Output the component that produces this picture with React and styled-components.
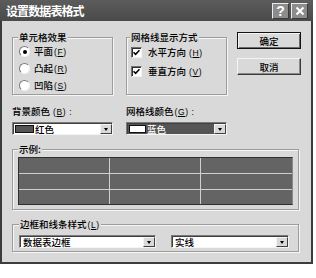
import React from 'react';
import styled, { createGlobalStyle } from 'styled-components';

const FACE = '#d9d9d9';
const FONT = '"Noto Sans CJK SC", "Noto Sans", sans-serif';

const Global = createGlobalStyle`
  html, body { margin: 0; padding: 0; background: #fff; }
  body { font-family: ${FONT}; color: #000; font-weight: 500; }
`;

const Dialog = styled.div`
  width: 313px;
  height: 264px;
  box-sizing: border-box;
  background: ${FACE};
  border: 2px solid #3c3c3c;
  border-top: none;
  display: flex;
  flex-direction: column;
`;

const TitleBar = styled.div`
  height: 21px;
  margin: 0 -2px;
  padding: 0 5px 0 6px;
  background: linear-gradient(#5c5c5c, #4a4a4a);
  display: flex;
  align-items: center;
  justify-content: space-between;
`;

const Title = styled.span`
  color: #fff;
  font-size: 12px;
  font-weight: 700;
  letter-spacing: -0.9px;
  line-height: 14px;
`;

const TitleButtons = styled.div`
  display: flex;
  gap: 2px;
`;

const TitleButton = styled.div`
  width: 17px;
  height: 16px;
  box-sizing: border-box;
  background: #8c8c8c;
  border: 1px solid;
  border-color: #ececec #3a3a3a #3a3a3a #ececec;
  display: flex;
  align-items: center;
  justify-content: center;
  color: #fff;
  font-family: "Liberation Sans", sans-serif;
  font-weight: 700;
  font-size: 14px;
  line-height: 14px;
`;

const Body = styled.div`
  flex: 1;
  padding: 10px 0 0 10px;
  display: flex;
  flex-direction: column;
`;

const TopRow = styled.div`
  display: flex;
  align-items: flex-start;
`;

const Group = styled.fieldset`
  margin: ${p => p.$mt || 0}px 0 0 ${p => p.$ml || 0}px;
  padding: 0;
  min-width: 0;
  box-sizing: border-box;
  width: ${p => p.$w}px;
  height: ${p => p.$h}px;
  border: 1px solid #9c9c9c;
  box-shadow: inset 1px 1px 0 #f6f6f6, 1px 1px 0 #f6f6f6;
`;

const Legend = styled.legend`
  margin-left: ${p => p.$ml}px;
  padding: 0 1px;
  font-size: 9.5px;
  line-height: 12px;
  background: ${FACE};
  white-space: nowrap;
`;

const Key = styled.span`
  margin-left: ${p => p.$gap || 0}px;
  letter-spacing: 0.6px;
  font-family: "Liberation Sans", sans-serif;
  font-size: 8.5px;
  font-weight: 400;
`;

const U = styled.span`
  text-decoration: underline;
  text-underline-offset: 1px;
`;

const OptionList = styled.div`
  display: flex;
  flex-direction: column;
  padding-left: ${p => p.$pl}px;
`;

const OptionRow = styled.div`
  height: ${p => p.$h}px;
  display: flex;
  align-items: center;
  gap: ${p => p.$gap}px;
  font-size: 9.5px;
  line-height: 12px;
  white-space: nowrap;
`;

const Radio = styled.span`
  width: 11px;
  height: 11px;
  box-sizing: border-box;
  border-radius: 50%;
  background: #fff;
  border: 1px solid;
  border-color: #7a7a7a #f2f2f2 #f2f2f2 #7a7a7a;
  display: flex;
  align-items: center;
  justify-content: center;
  &::after {
    content: '';
    width: 4px;
    height: 4px;
    border-radius: 50%;
    background: ${p => (p.$on ? '#000' : 'transparent')};
  }
`;

const Check = styled.span`
  width: 11px;
  height: 11px;
  box-sizing: border-box;
  background: #fff;
  border: 1px solid;
  border-color: #707070 #f2f2f2 #f2f2f2 #707070;
  box-shadow: inset 1px 1px 0 #303030;
  display: flex;
  align-items: center;
  justify-content: center;
`;

const ButtonCol = styled.div`
  margin: 1px 0 0 10px;
  display: flex;
  flex-direction: column;
  gap: 9px;
`;

const Button = styled.div`
  width: 64px;
  height: 17px;
  box-sizing: border-box;
  background: ${FACE};
  border: 1px solid;
  border-color: ${p => (p.$default ? '#111' : '#f4f4f4 #3a3a3a #3a3a3a #f4f4f4')};
  box-shadow: ${p =>
    p.$default
      ? 'inset 1px 1px 0 #f4f4f4, inset -1px -1px 0 #6a6a6a'
      : 'inset -1px -1px 0 #8a8a8a'};
  display: flex;
  align-items: center;
  justify-content: center;
  font-size: 9.5px;
  line-height: 12px;
`;

const ColorRow = styled.div`
  margin-top: 10px;
  display: grid;
  grid-template-columns: 101px 101px;
  column-gap: 13px;
`;

const Field = styled.div`
  display: flex;
  flex-direction: column;
  gap: 4px;
`;

const Label = styled.div`
  font-size: 9.5px;
  line-height: 12px;
  white-space: nowrap;
`;

const Combo = styled.div`
  width: ${p => p.$w}px;
  height: 13px;
  box-sizing: border-box;
  background: #fff;
  border: 1px solid;
  border-color: #7a7a7a #f4f4f4 #f4f4f4 #7a7a7a;
  box-shadow: inset 1px 1px 0 #404040;
  display: flex;
  align-items: stretch;
`;

const ComboValue = styled.div`
  flex: 1;
  min-width: 0;
  margin: 1px 0 0 1px;
  display: flex;
  align-items: center;
  gap: 1px;
  padding-left: ${p => p.$pl || 0}px;
  font-size: 9.5px;
  line-height: 11px;
  background: ${p => (p.$selected ? '#555' : 'transparent')};
  color: ${p => (p.$selected ? '#fff' : '#000')};
  white-space: nowrap;
`;

const Swatch = styled.span`
  width: ${p => p.$w}px;
  height: 8px;
  box-sizing: border-box;
  border: 1px solid #111;
  background: ${p => p.$color};
`;

const DropButton = styled.div`
  width: 12px;
  margin-top: 1px;
  box-sizing: border-box;
  background: ${FACE};
  border: 1px solid;
  border-color: #f4f4f4 #404040 #404040 #f4f4f4;
  display: flex;
  align-items: center;
  justify-content: center;
  &::after {
    content: '';
    border-left: 2.5px solid transparent;
    border-right: 2.5px solid transparent;
    border-top: 3px solid #000;
  }
`;

const SampleFrame = styled.div`
  margin: 2px 0 0 5px;
  width: 275px;
  height: 48px;
  box-sizing: border-box;
  border: 1px solid #2e2e2e;
  border-right-color: #8a8a8a;
  background: #cfcfcf;
  display: grid;
  grid-template-columns: 90px 90px 1fr;
  grid-template-rows: 15px 15px 1fr;
  gap: 1px;
`;

const Cell = styled.div`
  background: #646464;
`;

const LineRow = styled.div`
  margin: 4px 0 0 6px;
  display: flex;
  gap: 15px;
`;

const CheckMark = () => (
  <svg width="7" height="7" viewBox="0 0 7 7">
    <path d="M0.5 3.2L2.6 5.3L6.5 1.2" stroke="#000" strokeWidth="1.6" fill="none" />
  </svg>
);

export default function App() {
  return (
    <>
      <Global />
      <Dialog>
        <TitleBar>
          <Title>设置数据表格式</Title>
          <TitleButtons>
            <TitleButton>?</TitleButton>
            <TitleButton>
              <svg width="10" height="10" viewBox="0 0 10 10">
                <path d="M1.5 1.5L8.5 8.5M8.5 1.5L1.5 8.5" stroke="#fff" strokeWidth="2" />
              </svg>
            </TitleButton>
          </TitleButtons>
        </TitleBar>
        <Body>
          <TopRow>
            <Group $w={101} $h={64}>
              <Legend $ml={5}>单元格效果</Legend>
              <OptionList $pl={6}>
                <OptionRow $h={17} $gap={4}>
                  <Radio $on />
                  <span>平面<Key $gap={1}>(<U>F</U>)</Key></span>
                </OptionRow>
                <OptionRow $h={17} $gap={4}>
                  <Radio />
                  <span>凸起<Key $gap={1}>(<U>R</U>)</Key></span>
                </OptionRow>
                <OptionRow $h={17} $gap={4}>
                  <Radio />
                  <span>凹陷<Key $gap={1}>(<U>S</U>)</Key></span>
                </OptionRow>
              </OptionList>
            </Group>
            <Group $w={101} $h={64} $ml={13}>
              <Legend $ml={3}>网格线显示方式</Legend>
              <OptionList $pl={4}>
                <OptionRow $h={19} $gap={6}>
                  <Check><CheckMark /></Check>
                  <span>水平方向<Key $gap={3}>(<U>H</U>)</Key></span>
                </OptionRow>
                <OptionRow $h={19} $gap={6}>
                  <Check><CheckMark /></Check>
                  <span>垂直方向<Key $gap={3}>(<U>V</U>)</Key></span>
                </OptionRow>
              </OptionList>
            </Group>
            <ButtonCol>
              <Button $default>确定</Button>
              <Button>取消</Button>
            </ButtonCol>
          </TopRow>

          <ColorRow>
            <Field>
              <Label>背景颜色<Key $gap={3}>(<U>B</U>) :</Key></Label>
              <Combo $w={101}>
                <ComboValue $pl={1}>
                  <Swatch $w={19} $color="#555" />
                  <span>红色</span>
                </ComboValue>
                <DropButton />
              </Combo>
            </Field>
            <Field>
              <Label>网格线颜色<Key $gap={1}>(<U>G</U>) :</Key></Label>
              <Combo $w={101}>
                <ComboValue $pl={1} $selected>
                  <Swatch $w={17} $color="#fff" />
                  <span>蓝色</span>
                </ComboValue>
                <DropButton />
              </Combo>
            </Field>
          </ColorRow>

          <Group $w={287} $h={67} $mt={8}>
            <Legend $ml={5}>示例:</Legend>
            <SampleFrame>
              {Array.from({ length: 9 }).map((_, i) => (
                <Cell key={i} />
              ))}
            </SampleFrame>
          </Group>

          <Group $w={287} $h={34} $mt={8}>
            <Legend $ml={6}>边框和线条样式<Key $gap={1}>(<U>L</U>)</Key></Legend>
            <LineRow>
              <Combo $w={137}>
                <ComboValue $pl={2}>数据表边框</ComboValue>
                <DropButton />
              </Combo>
              <Combo $w={118}>
                <ComboValue $pl={2}>实线</ComboValue>
                <DropButton />
              </Combo>
            </LineRow>
          </Group>
        </Body>
      </Dialog>
    </>
  );
}
